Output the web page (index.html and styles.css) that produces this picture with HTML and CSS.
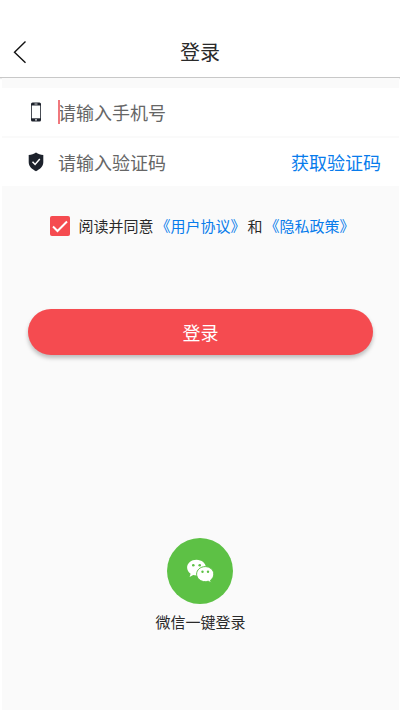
FILE: index.html
```html
<!DOCTYPE html>
<html lang="zh-CN">
<head>
<meta charset="utf-8">
<meta name="viewport" content="width=device-width, initial-scale=1">
<title>登录</title>
<link rel="stylesheet" href="styles.css">
</head>
<body>
<header class="topbar">
  <button class="back" type="button" aria-label="返回">
    <svg width="14" height="24" viewBox="0 0 14 24" fill="none" stroke="#111" stroke-width="1.4"><path d="M12.500 1.500 1.500 12.300l11 10.500"/></svg>
  </button>
  <h1 class="title">登录</h1>
</header>
<main class="page">
  <form class="form">
    <div class="row">
      <label class="row-icon" for="phone" aria-label="手机号">
        <svg width="16" height="20" viewBox="0 0 16 20"><rect x="3" y="0.500" width="10" height="19" rx="1.600" fill="#1d222c"/><path fill="#fff" d="M3.800 3.500h8.400v12.800H3.800z"/><path stroke="#fff" stroke-width=".8" d="M6.500 2h3"/><circle cx="8" cy="17.900" r=".8" fill="#fff"/></svg>
      </label>
      <div class="field">
        <span class="caret"></span>
        <input class="input" id="phone" type="tel" placeholder="请输入手机号">
      </div>
    </div>
    <div class="row">
      <label class="row-icon" for="code" aria-label="验证码">
        <svg width="16" height="20" viewBox="0 0 16 20"><path fill="#1d222c" d="M8 .6c2.200 1.700 4.600 2.300 7.300 2.400v7.200c0 4.400-3.600 7-7.300 9-3.700-2-7.300-4.600-7.300-9V3C3.400 2.900 5.800 2.300 8 .6z"/><path fill="none" stroke="#fff" stroke-width="1.500" d="m4.500 9.700 2.600 2.700 4.700-5.400"/></svg>
      </label>
      <div class="field">
        <input class="input" id="code" type="text" placeholder="请输入验证码">
      </div>
      <button class="get-code" type="button">获取验证码</button>
    </div>
    <div class="agree">
      <input class="check" id="agree" type="checkbox" checked>
      <label for="agree">阅读并同意</label>
      <a class="link" href="#terms">《用户协议》</a>
      <span>和</span>
      <a class="link" href="#privacy">《隐私政策》</a>
    </div>
    <button class="submit" type="submit">登录</button>
  </form>
  <button class="wechat" type="button">
    <svg class="wechat-logo" viewBox="0 0 66 66">
      <circle cx="33" cy="33" r="33" fill="#5dc145"/>
      <path fill="#fff" d="M29.500 21.700c-5.200 0-9.400 3.500-9.400 7.900 0 2.500 1.300 4.700 3.500 6.100l-1 3.200 3.600-2c1 .3 2.200.5 3.300.5 5.200 0 9.400-3.500 9.400-7.800s-4.200-7.900-9.400-7.900z"/>
      <path fill="#fff" stroke="#5dc145" stroke-width="1" d="M38.200 28.600c-4.700 0-8.600 3.300-8.600 7.500s3.900 7.600 8.600 7.600c1 0 2-.2 3-.5l3.100 1.800-.8-2.800c2-1.300 3.300-3.500 3.300-6.100 0-4.200-3.900-7.500-8.600-7.500z"/>
      <g fill="#5dc145"><circle cx="26.300" cy="27.300" r="1.300"/><circle cx="32.700" cy="27.300" r="1.300"/><circle cx="35.500" cy="33.800" r="1.200"/><circle cx="41" cy="33.800" r="1.200"/></g>
    </svg>
    <span>微信一键登录</span>
  </button>
</main>
</body>
</html>
```
FILE: styles.css
```css
* {
  box-sizing: border-box;
}

body {
  margin: 0;
  min-height: 100vh;
  display: flex;
  flex-direction: column;
  background: #fff;
  color: #2a2a2a;
  font-family: "Noto Sans CJK SC", sans-serif;
  font-size: 15px;
  line-height: 24px;
}

button {
  border: 0;
  padding: 0;
  background: none;
  color: inherit;
  font: inherit;
  cursor: pointer;
}

.topbar {
  display: grid;
  grid-template-columns: 40px 1fr 40px;
  align-items: center;
  padding: 26px 0 0;
  height: 78px;
  border-bottom: 1px solid #c8c8c8;
  box-shadow: 0 1px 1px #ececec;
}

.back {
  display: flex;
  padding-left: 13px;
}

.title {
  margin: 0;
  text-align: center;
  font-size: 20px;
  font-weight: 400;
}

.page {
  flex: 1;
  display: flex;
  flex-direction: column;
  align-items: center;
  margin: 0 1px 0 2px;
  padding: 10px 0 76px;
  background: #fafafa;
}

.form {
  width: 100%;
  display: flex;
  flex-direction: column;
  gap: 2px;
}

.row {
  display: flex;
  align-items: center;
  height: 48px;
  padding: 0 18px 0 26px;
  background: #fff;
  font-size: 18px;
}

.row-icon {
  display: flex;
  margin-right: 14px;
}

.field {
  position: relative;
  flex: 1;
  min-width: 0;
}

.input {
  display: block;
  width: 100%;
  padding: 0;
  border: 0;
  outline: 0;
  background: none;
  color: #2a2a2a;
  font: inherit;
}

.input::placeholder {
  color: #666;
  opacity: 1;
}

.caret {
  position: absolute;
  left: 0;
  top: 0;
  width: 2px;
  height: 24px;
  background: #f0787d;
}

.get-code,
.link {
  color: #087cec;
  text-decoration: none;
}

.agree {
  display: flex;
  justify-content: center;
  align-items: center;
  gap: 2px;
  margin-top: 26px;
  padding-left: 4px;
}

.check {
  appearance: none;
  width: 20px;
  height: 20px;
  margin: 0 6px 0 0;
  border-radius: 2px;
  background: #f54b50 url("data:image/svg+xml,%3Csvg xmlns='http://www.w3.org/2000/svg' viewBox='0 0 20 20'%3E%3Cpath d='M3 10.500l4.500 4.500L17 5.500' fill='none' stroke='%23fff' stroke-width='2'/%3E%3C/svg%3E") center / 100%;
}

.submit {
  height: 46px;
  margin: 69px 26px 0;
  border-radius: 23px;
  background: #f54b50;
  box-shadow: 0 3px 4px rgba(0, 0, 0, 0.25);
  color: #fff;
  font-size: 18px;
}

.wechat {
  display: flex;
  flex-direction: column;
  align-items: center;
  gap: 6px;
  margin-top: auto;
}

.wechat-logo {
  width: 66px;
  height: 66px;
}
```
